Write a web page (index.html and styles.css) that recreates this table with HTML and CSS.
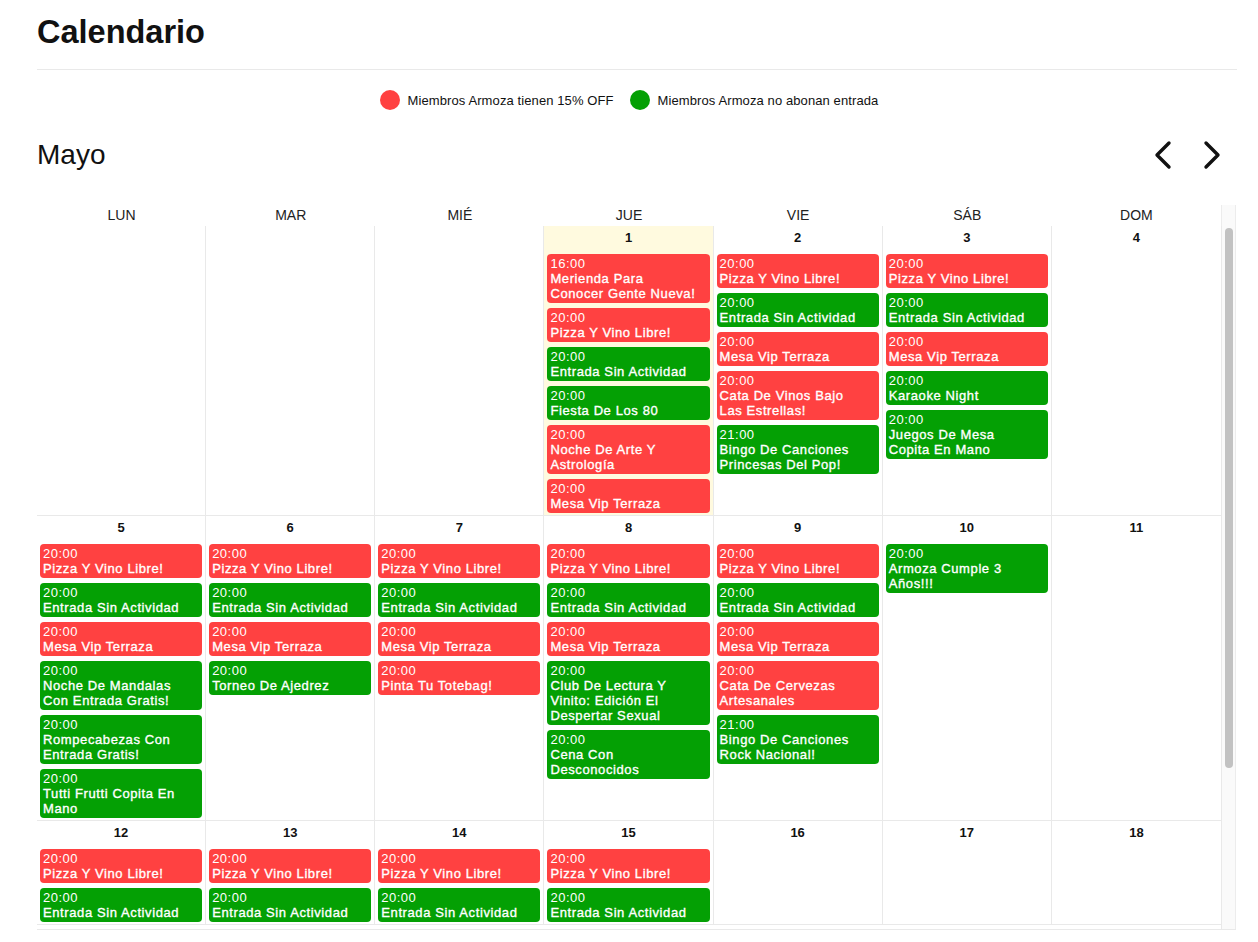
FILE: index.html
```html
<!DOCTYPE html>
<html lang="es">
<head>
<meta charset="utf-8">
<title>Calendario</title>
<link rel="stylesheet" href="styles.css">
</head>
<body>
<div class="page">
  <h1 class="title">Calendario</h1>

  <div class="legend">
    <div class="legend-item"><span class="dot red"></span><span>Miembros Armoza tienen 15% OFF</span></div>
    <div class="legend-item"><span class="dot green"></span><span>Miembros Armoza no abonan entrada</span></div>
  </div>

  <div class="month-bar">
    <h2 class="month">Mayo</h2>
    <div class="nav">
      <button class="nav-btn" aria-label="Anterior"><svg width="24" height="32" viewBox="0 0 24 32"><polyline points="19,4 7,16 19,28" fill="none" stroke="#111" stroke-width="3.4" stroke-linecap="round" stroke-linejoin="round"/></svg></button>
      <button class="nav-btn" aria-label="Siguiente"><svg width="24" height="32" viewBox="0 0 24 32"><polyline points="5,4 17,16 5,28" fill="none" stroke="#111" stroke-width="3.4" stroke-linecap="round" stroke-linejoin="round"/></svg></button>
    </div>
  </div>

  <div class="cal">
    <div class="cal-head">
      <div>LUN</div><div>MAR</div><div>MIÉ</div><div>JUE</div><div>VIE</div><div>SÁB</div><div>DOM</div><div class="gutter"></div>
    </div>
    <div class="cal-main">
      <div class="cal-body">
        <!-- semana 1 -->
        <div class="week">
          <div class="cell"><div class="daynum"></div></div>
          <div class="cell"><div class="daynum"></div></div>
          <div class="cell"><div class="daynum"></div></div>
          <div class="cell today"><div class="daynum">1</div>
            <div class="events">
              <div class="ev r"><div class="t">16:00</div><div class="n">Merienda Para Conocer Gente Nueva!</div></div>
              <div class="ev r"><div class="t">20:00</div><div class="n">Pizza Y Vino Libre!</div></div>
              <div class="ev g"><div class="t">20:00</div><div class="n">Entrada Sin Actividad</div></div>
              <div class="ev g"><div class="t">20:00</div><div class="n">Fiesta De Los 80</div></div>
              <div class="ev r"><div class="t">20:00</div><div class="n">Noche De Arte Y Astrología</div></div>
              <div class="ev r"><div class="t">20:00</div><div class="n">Mesa Vip Terraza</div></div>
            </div>
          </div>
          <div class="cell"><div class="daynum">2</div>
            <div class="events">
              <div class="ev r"><div class="t">20:00</div><div class="n">Pizza Y Vino Libre!</div></div>
              <div class="ev g"><div class="t">20:00</div><div class="n">Entrada Sin Actividad</div></div>
              <div class="ev r"><div class="t">20:00</div><div class="n">Mesa Vip Terraza</div></div>
              <div class="ev r"><div class="t">20:00</div><div class="n">Cata De Vinos Bajo Las Estrellas!</div></div>
              <div class="ev g"><div class="t">21:00</div><div class="n">Bingo De Canciones Princesas Del Pop!</div></div>
            </div>
          </div>
          <div class="cell"><div class="daynum">3</div>
            <div class="events">
              <div class="ev r"><div class="t">20:00</div><div class="n">Pizza Y Vino Libre!</div></div>
              <div class="ev g"><div class="t">20:00</div><div class="n">Entrada Sin Actividad</div></div>
              <div class="ev r"><div class="t">20:00</div><div class="n">Mesa Vip Terraza</div></div>
              <div class="ev g"><div class="t">20:00</div><div class="n">Karaoke Night</div></div>
              <div class="ev g"><div class="t">20:00</div><div class="n">Juegos De Mesa Copita En Mano</div></div>
            </div>
          </div>
          <div class="cell"><div class="daynum">4</div></div>
        </div>

        <!-- semana 2 -->
        <div class="week">
          <div class="cell"><div class="daynum">5</div>
            <div class="events">
              <div class="ev r"><div class="t">20:00</div><div class="n">Pizza Y Vino Libre!</div></div>
              <div class="ev g"><div class="t">20:00</div><div class="n">Entrada Sin Actividad</div></div>
              <div class="ev r"><div class="t">20:00</div><div class="n">Mesa Vip Terraza</div></div>
              <div class="ev g"><div class="t">20:00</div><div class="n">Noche De Mandalas Con Entrada Gratis!</div></div>
              <div class="ev g"><div class="t">20:00</div><div class="n">Rompecabezas Con Entrada Gratis!</div></div>
              <div class="ev g"><div class="t">20:00</div><div class="n">Tutti Frutti Copita En Mano</div></div>
            </div>
          </div>
          <div class="cell"><div class="daynum">6</div>
            <div class="events">
              <div class="ev r"><div class="t">20:00</div><div class="n">Pizza Y Vino Libre!</div></div>
              <div class="ev g"><div class="t">20:00</div><div class="n">Entrada Sin Actividad</div></div>
              <div class="ev r"><div class="t">20:00</div><div class="n">Mesa Vip Terraza</div></div>
              <div class="ev g"><div class="t">20:00</div><div class="n">Torneo De Ajedrez</div></div>
            </div>
          </div>
          <div class="cell"><div class="daynum">7</div>
            <div class="events">
              <div class="ev r"><div class="t">20:00</div><div class="n">Pizza Y Vino Libre!</div></div>
              <div class="ev g"><div class="t">20:00</div><div class="n">Entrada Sin Actividad</div></div>
              <div class="ev r"><div class="t">20:00</div><div class="n">Mesa Vip Terraza</div></div>
              <div class="ev r"><div class="t">20:00</div><div class="n">Pinta Tu Totebag!</div></div>
            </div>
          </div>
          <div class="cell"><div class="daynum">8</div>
            <div class="events">
              <div class="ev r"><div class="t">20:00</div><div class="n">Pizza Y Vino Libre!</div></div>
              <div class="ev g"><div class="t">20:00</div><div class="n">Entrada Sin Actividad</div></div>
              <div class="ev r"><div class="t">20:00</div><div class="n">Mesa Vip Terraza</div></div>
              <div class="ev g"><div class="t">20:00</div><div class="n">Club De Lectura Y Vinito: Edición El Despertar Sexual</div></div>
              <div class="ev g"><div class="t">20:00</div><div class="n">Cena Con Desconocidos</div></div>
            </div>
          </div>
          <div class="cell"><div class="daynum">9</div>
            <div class="events">
              <div class="ev r"><div class="t">20:00</div><div class="n">Pizza Y Vino Libre!</div></div>
              <div class="ev g"><div class="t">20:00</div><div class="n">Entrada Sin Actividad</div></div>
              <div class="ev r"><div class="t">20:00</div><div class="n">Mesa Vip Terraza</div></div>
              <div class="ev r"><div class="t">20:00</div><div class="n">Cata De Cervezas Artesanales</div></div>
              <div class="ev g"><div class="t">21:00</div><div class="n">Bingo De Canciones Rock Nacional!</div></div>
            </div>
          </div>
          <div class="cell"><div class="daynum">10</div>
            <div class="events">
              <div class="ev g"><div class="t">20:00</div><div class="n">Armoza Cumple 3 Años!!!</div></div>
            </div>
          </div>
          <div class="cell"><div class="daynum">11</div></div>
        </div>

        <!-- semana 3 -->
        <div class="week">
          <div class="cell"><div class="daynum">12</div>
            <div class="events">
              <div class="ev r"><div class="t">20:00</div><div class="n">Pizza Y Vino Libre!</div></div>
              <div class="ev g"><div class="t">20:00</div><div class="n">Entrada Sin Actividad</div></div>
            </div>
          </div>
          <div class="cell"><div class="daynum">13</div>
            <div class="events">
              <div class="ev r"><div class="t">20:00</div><div class="n">Pizza Y Vino Libre!</div></div>
              <div class="ev g"><div class="t">20:00</div><div class="n">Entrada Sin Actividad</div></div>
            </div>
          </div>
          <div class="cell"><div class="daynum">14</div>
            <div class="events">
              <div class="ev r"><div class="t">20:00</div><div class="n">Pizza Y Vino Libre!</div></div>
              <div class="ev g"><div class="t">20:00</div><div class="n">Entrada Sin Actividad</div></div>
            </div>
          </div>
          <div class="cell"><div class="daynum">15</div>
            <div class="events">
              <div class="ev r"><div class="t">20:00</div><div class="n">Pizza Y Vino Libre!</div></div>
              <div class="ev g"><div class="t">20:00</div><div class="n">Entrada Sin Actividad</div></div>
            </div>
          </div>
          <div class="cell"><div class="daynum">16</div></div>
          <div class="cell"><div class="daynum">17</div></div>
          <div class="cell"><div class="daynum">18</div></div>
        </div>
      </div>
      <div class="scrollbar"><div class="thumb"></div></div>
    </div>
  </div>
</div>
</body>
</html>
```

FILE: styles.css
```css
* { box-sizing: border-box; }

body {
  margin: 0;
  background: #fff;
  color: #111;
  font-family: "Liberation Sans", Arial, Helvetica, sans-serif;
}

.page {
  width: 1200px;
  margin-left: 37px;
}

.title {
  margin: 0;
  padding: 13px 0 18px;
  font-size: 32.5px;
  line-height: 38px;
  font-weight: 700;
  color: #111;
  border-bottom: 1px solid #e9e9e9;
}

.legend {
  display: flex;
  justify-content: center;
  gap: 16px;
  margin-top: 20px;
  padding-right: 16px;
  height: 20px;
}

.legend-item {
  display: flex;
  align-items: center;
  gap: 8px;
  font-size: 13px;
  letter-spacing: 0.1px;
  color: #111;
}

.dot {
  width: 20px;
  height: 20px;
  border-radius: 50%;
  display: inline-block;
}
.dot.red { background: #ff4141; }
.dot.green { background: #04a004; }

.month-bar {
  display: flex;
  justify-content: space-between;
  align-items: center;
  margin-top: 29px;
  height: 32px;
}

.month {
  margin: 0;
  font-size: 28px;
  font-weight: 400;
  line-height: 32px;
  color: #111;
}

.nav {
  display: flex;
  gap: 27px;
  margin-right: 12px;
}

.nav-btn {
  width: 24px;
  height: 32px;
  padding: 0;
  border: 0;
  background: none;
  display: block;
}
.nav-btn svg { display: block; }

.cal {
  margin-top: 34px;
  width: 1199px;
  border-bottom: 1px solid #e9e9e9;
}

.cal-head {
  display: grid;
  grid-template-columns: repeat(7, 1fr) 15px;
  height: 21px;
  line-height: 21px;
  font-size: 14px;
  text-align: center;
  color: #222;
}

.gutter {
  background: #fafafa;
  border-left: 1px solid #ececec;
  border-right: 1px solid #ececec;
}

.cal-main {
  display: flex;
  height: 703px;
}

.cal-body {
  flex: 1;
  min-width: 0;
  overflow: hidden;
}

.scrollbar {
  width: 15px;
  flex: none;
  background: #fafafa;
  border-left: 1px solid #e9e9e9;
  border-right: 1px solid #ececec;
  padding: 2px 0 0 3px;
}

.thumb {
  width: 8px;
  height: 540px;
  border-radius: 4px;
  background: #c2c2c2;
}

.week {
  display: grid;
  grid-template-columns: repeat(7, 1fr);
}

.cell {
  border-right: 1px solid #e9e9e9;
  border-bottom: 1px solid #e9e9e9;
  padding-bottom: 2px;
  min-width: 0;
}
.cell:nth-child(7) { border-right: 0; }

.cell.today { background: rgba(255, 220, 40, 0.15); }

.daynum {
  padding-top: 4px;
  height: 20px;
  line-height: 16px;
  margin-bottom: 8px;
  font-size: 13px;
  font-weight: 700;
  text-align: center;
  color: #111;
}

.events {
  display: flex;
  flex-direction: column;
  gap: 5px;
  padding: 0 3px;
}

.ev {
  border-radius: 4px;
  padding: 2px 11px 2px 3px;
  color: #fff;
  font-size: 13px;
  line-height: 15px;
}
.ev.r { background: #ff4141; }
.ev.g { background: #04a004; }

.ev .t { letter-spacing: 0.5px; }
.ev .n {
  letter-spacing: 0.6px;
  -webkit-text-stroke: 0.35px #fff;
}
```
